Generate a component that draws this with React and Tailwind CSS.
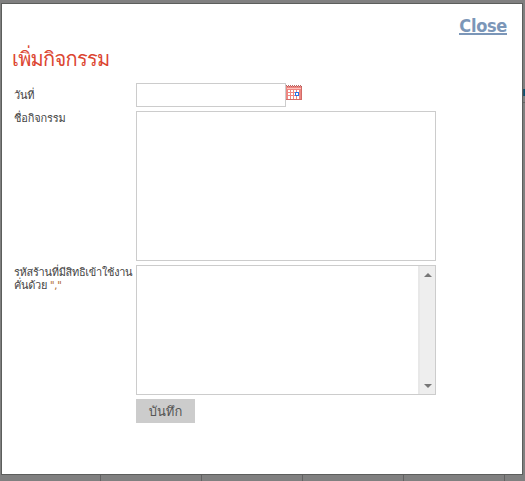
function CalendarIcon() {
  return (
    <svg width="16" height="16" viewBox="0 0 16 16" shapeRendering="crispEdges" className="mt-[2px] block shrink-0">
      <rect y="1" width="16" height="14" fill="#ee8782" />
      <path d="M0 .5H16" stroke="#b86a68" strokeDasharray="1 1" />
      <path d="M1 1.5H16" stroke="#b75e5b" strokeDasharray="1 1" />
      <path d="M1 3.5H15" stroke="#ffc1bc" />
      <g fill="#fff">
        {[5, 8, 11].map((y) => [2, 5, 8, 11].map((x) => <rect key={`${x}-${y}`} x={x} y={y} width="2" height="2" />))}
      </g>
      <path d="M2 13.5H14" stroke="#fff" strokeDasharray="2 1" />
      <path d="M15.5 2V15M0 14.5H16" stroke="#d16b67" />
      <rect x="9.5" y="7.5" width="3" height="3" fill="#fff" stroke="#2674e8" />
    </svg>
  );
}

function Scrollbar() {
  return (
    <div className="flex w-[17px] flex-col items-center justify-between border-l-2 border-[#e8e8e8] bg-[#eeeeee] pt-[7px] pb-[6px]">
      <svg width="8" height="4" viewBox="0 0 8 4"><path d="M4 0L8 4H0Z" fill="#777" /></svg>
      <svg width="8" height="4" viewBox="0 0 8 4"><path d="M0 0H8L4 4Z" fill="#777" /></svg>
    </div>
  );
}

const label = "w-[122px] shrink-0 whitespace-nowrap text-[11px] leading-[13px] text-[#444]";

export default function App() {
  return (
    <div className="relative h-[481px] w-[525px] overflow-hidden bg-[#808080] pt-[3px] pl-[1px] font-['Tahoma','DejaVu_Sans_Condensed','Waree','Loma','Noto_Sans_Thai_Looped','Garuda','Umpush','Laksaman','Norasi','Droid_Sans_Thai','FreeSans','FreeSerif','Unifont',sans-serif]">
      <div className="absolute bottom-0 left-[100px] flex h-[6px] gap-[100px]">
        {[0, 1, 2, 3, 4].map((i) => <div key={i} className="w-px bg-[#626262]" />)}
      </div>
      <div className="absolute top-[82px] left-[522px] text-[13px] font-bold text-[#07516b]">r</div>
      <div className="absolute top-[102px] right-0 h-px w-[2px] bg-[#656565]" />
      <div className="relative h-[472px] w-[522px] border border-[#5c5e5c] bg-white px-[12px]">
        <div className="flex h-[41px] justify-end pt-[11px] pr-[3px]">
          <a className="h-[20px] border-b-2 border-[#7b96b8] text-[18px] leading-[21px] font-bold tracking-[-0.3px] text-[#7b96b8]">Close</a>
        </div>
        <h1 className="-ml-[2px] h-[38px] text-[20px] leading-[29px] tracking-[-0.7px] whitespace-nowrap text-[#dc4632]"><span>เพิ่มกิจกรรม</span></h1>
        <div className="flex h-[28px]">
          <div className={`${label} pt-[6px]`}><span className="tracking-[-0.2px]">วันที่</span></div>
          <div className="h-[24px] w-[150px] border border-[#ccc]" />
          <CalendarIcon />
        </div>
        <div className="flex h-[154px]">
          <div className={`${label} pt-[1px]`}><span className="tracking-[-0.15px]">ชื่อกิจกรรม</span></div>
          <div className="h-[150px] w-[300px] border border-[#ccc]" />
        </div>
        <div className="flex h-[134px]">
          <div className={`${label} pt-[1px]`}><span className="tracking-[-0.3px]">รหัสร้านที่มีสิทธิเข้าใช้งาน</span><br /><span className="tracking-[-0.3px]">คั่นด้วย <span className="font-['DejaVu_Sans_Condensed',sans-serif] tracking-[-0.2px] text-[#b0672a]">","</span></span></div>
          <div className="flex h-[130px] w-[300px] justify-end border border-[#ccc]"><Scrollbar /></div>
        </div>
        <button className="ml-[122px] block h-[24px] w-[59px] bg-[#ccc] text-[13px] leading-[26px] text-[#555]">บันทึก</button>
      </div>
    </div>
  );
}
